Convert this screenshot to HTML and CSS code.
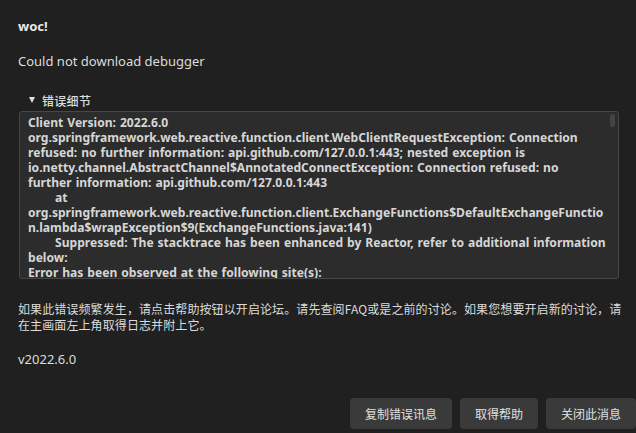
FILE: index.html
```html
<!DOCTYPE html>
<html lang="zh-CN">
<head>
    <meta charset="UTF-8">
    <meta name="viewport" content="width=device-width, initial-scale=1.0">
    <title>woc!</title>
    <link rel="stylesheet" href="styles.css">
</head>
<body>

<div class="dialog">
    <div class="title">woc!</div>
    <p class="message">Could not download debugger</p>

    <details class="details" open>
        <summary><span class="arrow"></span>错误细节</summary>
        <div class="trace-box">
            <div class="trace">Client Version: 2022.6.0
org.springframework.web.reactive.function.client.WebClientRequestException: Connection refused: no further information: api.github.com/127.0.0.1:443; nested exception is io.netty.channel.AbstractChannel$AnnotatedConnectException: Connection refused: no further information: api.github.com/127.0.0.1:443
	at org.springframework.web.reactive.function.client.ExchangeFunctions$DefaultExchangeFunction.lambda$wrapException$9(ExchangeFunctions.java:141)
	Suppressed: The stacktrace has been enhanced by Reactor, refer to additional information below:
Error has been observed at the following site(s):
	*__checkpoint ⇢ Request to GET https://api.github.com/repos/ [DefaultWebClient]
Original Stack Trace:</div>
            <div class="scroll-thumb"></div>
        </div>
    </details>

    <p class="hint">如果此错误频繁发生，请点击帮助按钮以开启论坛。请先查阅FAQ或是之前的讨论。如果您想要开启新的讨论，请在主画面左上角取得日志并附上它。</p>

    <p class="version">v2022.6.0</p>

    <div class="actions">
        <button class="btn">复制错误讯息</button>
        <button class="btn">取得帮助</button>
        <button class="btn">关闭此消息</button>
    </div>
</div>

</body>
</html>
```

FILE: styles.css
```css
body {
    margin: 0;
    background-color: #202020;
    color: #dcdcdc;
    font-family: "Noto Sans", "Noto Sans CJK SC", sans-serif;
    font-size: 13px;
}

.dialog {
    padding: 18px 0 0 18px;
}

.title {
    font-weight: bold;
    line-height: 16px;
    color: #e8e8e8;
}

.message {
    margin: 19px 0 0;
    line-height: 16px;
}

.details {
    margin-top: 23px;
}

.details summary {
    display: flex;
    align-items: center;
    list-style: none;
    height: 16px;
    padding-left: 11px;
    font-size: 12px;
    letter-spacing: 0.3px;
    font-family: "Noto Sans CJK SC", sans-serif;
    font-weight: 500;
    cursor: pointer;
}

.details summary::-webkit-details-marker {
    display: none;
}

.arrow {
    width: 0;
    height: 0;
    border-left: 3.5px solid transparent;
    border-right: 3.5px solid transparent;
    border-top: 6px solid #e0e0e0;
    margin-right: 7px;
}

.trace-box {
    position: relative;
    margin: 3px 0 0 1px;
    width: 600px;
    height: 168px;
    box-sizing: border-box;
    background-color: #2c2c2c;
    border: 1px solid #474747;
    border-radius: 3px;
    overflow: hidden;
}

.trace {
    padding: 3px 12px 0 8px;
    white-space: pre-wrap;
    overflow-wrap: anywhere;
    tab-size: 27px;
    font-size: 12.1px;
    font-weight: bold;
    word-spacing: 0.8px;
    line-height: 15px;
    color: #d6d6d6;
}

.scroll-thumb {
    position: absolute;
    top: 2px;
    right: 3px;
    width: 5px;
    height: 13px;
    border-radius: 2px;
    background-color: #444;
}

.hint {
    margin: 22px 0 0;
    padding-right: 10px;
    font-family: "Noto Sans CJK SC", sans-serif;
    font-size: 12px;
    letter-spacing: 0.1px;
    line-height: 16px;
}

.version {
    margin: 18px 0 0;
    line-height: 16px;
}

.actions {
    display: flex;
    justify-content: flex-end;
    gap: 8px;
    margin-top: 31px;
}

.btn {
    height: 31px;
    padding: 0 15px;
    border: none;
    border-radius: 4px;
    background-color: #3a3a3a;
    color: #e0e0e0;
    font-family: "Noto Sans CJK SC", sans-serif;
    font-size: 12px;
}
```
